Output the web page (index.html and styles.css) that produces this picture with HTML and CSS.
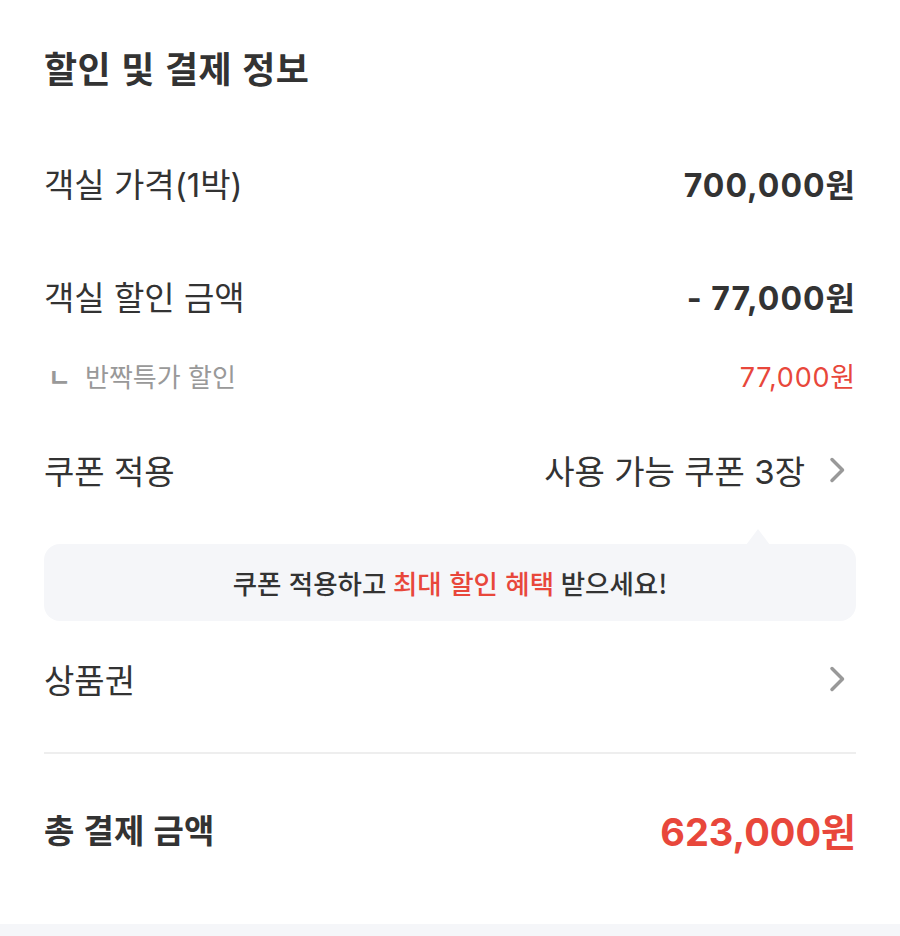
FILE: index.html
```html
<!DOCTYPE html>
<html lang="ko">
<head>
    <meta charset="UTF-8">
    <meta name="viewport" content="width=device-width, initial-scale=1.0">
    <title>할인 및 결제 정보</title>
    <link rel="stylesheet" href="styles.css">
</head>
<body>

    <div class="payment">
        <h1 class="title">할인 및 결제 정보</h1>

        <div class="row row-price">
            <span class="label">객실 가격(1박)</span>
            <span class="amount">700,000원</span>
        </div>

        <div class="row row-discount">
            <span class="label">객실 할인 금액</span>
            <span class="amount">- 77,000원</span>
        </div>

        <div class="sub-row">
            <span class="sub-label"><span class="branch">ㄴ</span>반짝특가 할인</span>
            <span class="sub-amount">77,000원</span>
        </div>

        <div class="row row-coupon">
            <span class="label">쿠폰 적용</span>
            <span class="link">사용 가능 쿠폰 3장
                <svg class="chevron" width="16" height="26" viewBox="0 0 16 26"><path d="M3 2.5 L13.5 13 L3 23.5" /></svg>
            </span>
        </div>

        <div class="tip">쿠폰 적용하고 <em>최대 할인 혜택</em> 받으세요!</div>

        <div class="row row-voucher">
            <span class="label">상품권</span>
            <span class="link">
                <svg class="chevron" width="16" height="26" viewBox="0 0 16 26"><path d="M3 2.5 L13.5 13 L3 23.5" /></svg>
            </span>
        </div>

        <hr class="divider">

        <div class="row row-total">
            <span class="total-label">총 결제 금액</span>
            <span class="total-amount">623,000원</span>
        </div>
    </div>

    <div class="band"></div>

</body>
</html>
```

FILE: styles.css
```css
body {
    margin: 0;
    font-family: "Noto Sans CJK KR", "Noto Sans", sans-serif;
    color: #333;
    background: #fff;
}
.payment {
    padding: 0 44px;
}
.title {
    margin: 0;
    height: 134px;
    display: flex;
    align-items: center;
    font-size: 36px;
    font-weight: 700;
    letter-spacing: 0.3px;
    color: #333;
}
.row {
    height: 60px;
    display: flex;
    align-items: center;
    justify-content: space-between;
}
.row-price {
    margin-top: 19px;
}
.row-discount {
    margin-top: 53px;
}
.row-coupon {
    margin-top: 45px;
}
.row-voucher {
    margin-top: 28px;
}
.row-total {
    margin-top: 45px;
}
.label {
    font-family: "Inter", "Noto Sans CJK KR", sans-serif;
    font-size: 33px;
    font-weight: 400;
}
.amount {
    font-family: "Inter", "Noto Sans CJK KR", sans-serif;
    font-size: 32px;
    font-weight: 700;
    letter-spacing: 1px;
}
.sub-row {
    margin-top: 29px;
    height: 40px;
    display: flex;
    align-items: center;
    justify-content: space-between;
}
.sub-label {
    font-size: 26px;
    color: #999;
}
.branch {
    display: inline-block;
    font-size: 25px;
    font-weight: 700;
    margin: 0 14px 0 4px;
    color: #999;
}
.sub-amount {
    font-family: "Inter", "Noto Sans CJK KR", sans-serif;
    font-size: 27px;
    letter-spacing: 0.8px;
    color: #e8473b;
}
.link {
    display: flex;
    align-items: center;
    font-family: "Inter", "Noto Sans CJK KR", sans-serif;
    font-size: 33px;
}
.chevron {
    margin: 0 11px 0 24px;
    fill: none;
    stroke: #999;
    stroke-width: 3.5;
    stroke-linecap: round;
    stroke-linejoin: round;
}
.tip {
    position: relative;
    margin-top: 44px;
    height: 77px;
    display: flex;
    align-items: center;
    justify-content: center;
    background: #f5f6f9;
    border-radius: 16px;
    font-size: 26.5px;
    font-weight: 500;
}
.tip::before {
    content: "";
    position: absolute;
    top: -15px;
    right: 86px;
    border-left: 12px solid transparent;
    border-right: 12px solid transparent;
    border-bottom: 16px solid #f5f6f9;
}
.tip em {
    font-style: normal;
    color: #e8473b;
    margin: 0 0.25em;
}
.divider {
    margin: 43px 0 0;
    border: 0;
    height: 2px;
    background: #eeeeee;
}
.total-label {
    font-size: 33px;
    font-weight: 700;
}
.total-amount {
    font-family: "Inter", "Noto Sans CJK KR", sans-serif;
    font-size: 38px;
    font-weight: 700;
    color: #e8473b;
}
.band {
    margin-top: 65px;
    height: 20px;
    background: #f5f6f9;
}
```
